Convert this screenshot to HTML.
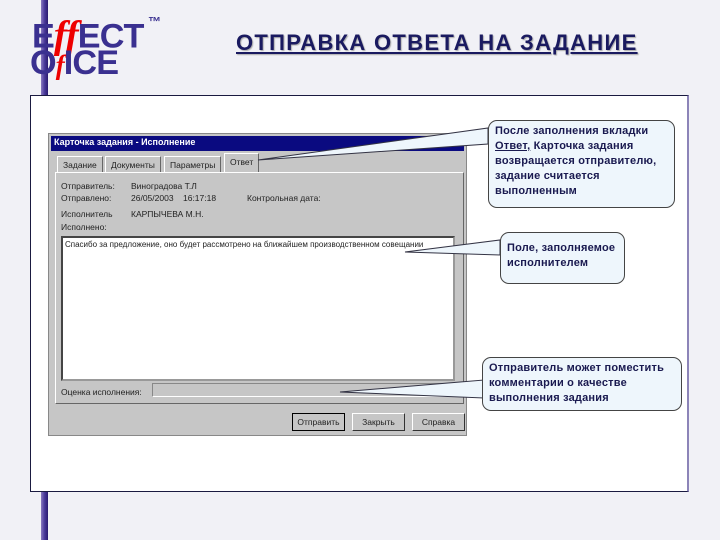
<!DOCTYPE html>
<html><head><meta charset="utf-8"><style>
*{margin:0;padding:0;box-sizing:border-box}
body{width:720px;height:540px;background:#f1f1f6;position:relative;overflow:hidden;font-family:"Liberation Sans",sans-serif}
.abs{position:absolute}
.bar{left:41px;top:0;width:7px;height:540px;background:linear-gradient(90deg,#8a7ac0,#4a3a9a,#2a1a70)}
.panel{left:30px;top:95px;width:659px;height:397px;background:#fff;border:1px solid #1a1a40;border-right:2px solid #8c84b8}
.title{left:236px;top:30px;font-size:22px;font-weight:bold;color:#1a1a60;text-decoration:underline;letter-spacing:1.3px;text-shadow:1px 1px 1px #aaa;white-space:nowrap}
.logo{font-family:"Liberation Sans",sans-serif;font-weight:bold;color:#3a3090;font-size:38px;letter-spacing:-1px;line-height:38px;white-space:nowrap;transform:scale(0.9,0.9);transform-origin:0 0}
.dlg{left:48px;top:133px;width:419px;height:303px;background:#c6c6c6;border:1px solid #888;font-size:8.5px;color:#222}
.tb{left:2px;top:2px;width:413px;height:15px;background:#0a0a80;color:#fff;font-size:9px;font-weight:bold;padding:1px 3px}
.tab{top:22px;height:17px;border:1px solid #fff;border-right-color:#666;border-bottom:none;padding:3px 5px;font-size:8.5px;background:#c6c6c6}
.body{left:6px;top:38px;width:409px;height:232px;border:1px solid #fff;border-right-color:#666;border-bottom-color:#666}
.ta{left:12px;top:102px;width:394px;height:145px;background:#fff;border:2px inset #999;font-size:8px;padding:2px;white-space:nowrap;overflow:hidden}
.btn{top:279px;height:18px;border:1px solid #fff;border-right-color:#333;border-bottom-color:#333;font-size:8.5px;text-align:center;padding-top:3px;background:#c6c6c6}
.call{background:#eef6fc;border:1px solid #444;border-radius:9px;color:#1a1a50;font-weight:bold;font-size:11px;line-height:15px;padding:3px 6px;letter-spacing:0.2px}
</style></head><body>
<div class="abs bar"></div>
<div class="abs logo" style="left:32px;top:18px">E<span style="color:#e00;font-style:italic;font-family:'Liberation Serif',serif;font-size:44px">ff</span>ECT</div>
<div class="abs logo" style="left:30px;top:46px">O<span style="color:#e00;font-style:italic;font-family:'Liberation Serif',serif;font-size:30px">f</span>ICE</div>
<div class="abs" style="left:148px;top:14px;font-size:13px;font-weight:bold;color:#3a3090">™</div>
<div class="abs title">ОТПРАВКА ОТВЕТА НА ЗАДАНИЕ</div>
<div class="abs panel"></div>
<div class="abs dlg">
 <div class="abs tb">Карточка задания - Исполнение</div>
 <div class="abs tab" style="left:8px">Задание</div>
 <div class="abs tab" style="left:56px">Документы</div>
 <div class="abs tab" style="left:115px">Параметры</div>
 <div class="abs tab" style="left:175px;top:19px;height:20px;border-bottom:none">Ответ</div>
 <div class="abs body"></div>
 <div class="abs" style="left:12px;top:47px">Отправитель:</div><div class="abs" style="left:82px;top:47px">Виноградова Т.Л</div>
 <div class="abs" style="left:12px;top:59px">Отправлено:</div><div class="abs" style="left:82px;top:59px">26/05/2003 &nbsp;&nbsp; 16:17:18</div><div class="abs" style="left:198px;top:59px">Контрольная дата:</div>
 <div class="abs" style="left:12px;top:75px">Исполнитель</div><div class="abs" style="left:82px;top:75px">КАРПЫЧЕВА М.Н.</div>
 <div class="abs" style="left:12px;top:88px">Исполнено:</div>
 <div class="abs ta">Спасибо за предложение, оно будет рассмотрено на ближайшем производственном совещании</div>
 <div class="abs" style="left:12px;top:253px">Оценка исполнения:</div>
 <div class="abs" style="left:103px;top:249px;width:303px;height:14px;border:1px solid #888;border-right-color:#fff;border-bottom-color:#fff"></div>
 <div class="abs btn" style="left:243px;width:53px;border:1px solid #000">Отправить</div>
 <div class="abs btn" style="left:303px;width:53px">Закрыть</div>
 <div class="abs btn" style="left:363px;width:53px">Справка</div>
</div>
<svg class="abs" style="left:0;top:0" width="720" height="540">
 <polygon points="258,160 488,128 488,144" fill="#eef6fc" stroke="#334" stroke-width="1"/>
 <polygon points="405,252 500,240 500,255" fill="#eef6fc" stroke="#334" stroke-width="1"/>
 <polygon points="340,392 484,380 484,398" fill="#eef6fc" stroke="#334" stroke-width="1"/>
</svg>
<div class="abs call" style="left:488px;top:120px;width:187px;height:88px">После заполнения вкладки<br><u>Ответ,</u> Карточка задания возвращается отправителю, задание считается выполненным</div>
<div class="abs call" style="left:500px;top:232px;width:125px;height:52px;padding-top:8px">Поле, заполняемое исполнителем</div>
<div class="abs call" style="left:482px;top:357px;width:200px;height:54px;padding-top:3px">Отправитель может поместить комментарии о качестве выполнения задания</div>
</body></html>
